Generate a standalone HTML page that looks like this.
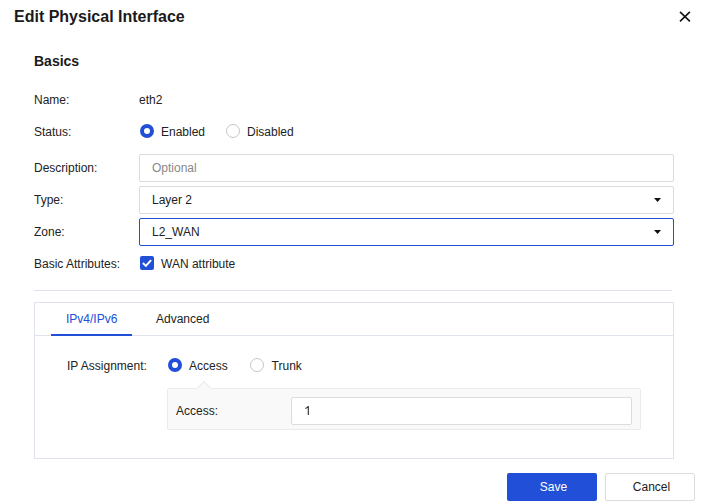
<!DOCTYPE html>
<html><head><meta charset="utf-8">
<style>
html,body{margin:0;padding:0;background:#fff;width:708px;height:504px;overflow:hidden;position:relative;}
body{font-family:"Liberation Sans",sans-serif;color:#222;}
.a{position:absolute;white-space:nowrap;}
.t{font-size:12px;line-height:14px;}
.title{font-size:16px;line-height:18px;font-weight:bold;color:#1a1a1a;}
.h{font-size:14px;line-height:16px;font-weight:bold;color:#1a1a1a;}
.inp{position:absolute;box-sizing:border-box;border:1px solid #dcdcdc;border-radius:2px;background:#fff;}
.radio{position:absolute;box-sizing:border-box;width:14px;height:14px;border-radius:50%;border:1px solid #c6c6c6;background:#fff;}
.radio.on{border:4px solid #214fd7;}
.caret{position:absolute;width:0;height:0;border-left:3.5px solid transparent;border-right:3.5px solid transparent;border-top:4px solid #111;}
</style></head>
<body>
<div class="a title" style="left:14px;top:8px;">Edit Physical Interface</div>
<svg class="a" style="left:679px;top:11px;" width="12" height="12" viewBox="0 0 12 12"><path d="M1 0.9L10.9 10.3M10.9 0.9L1 10.3" stroke="#111" stroke-width="1.6" fill="none"/></svg>

<div class="a h" style="left:34px;top:53px;">Basics</div>

<div class="a t" style="left:34px;top:93px;">Name:</div>
<div class="a t" style="left:139px;top:93px;">eth2</div>

<div class="a t" style="left:34px;top:125px;">Status:</div>
<div class="radio on" style="left:140px;top:124px;"></div>
<div class="a t" style="left:161px;top:125px;">Enabled</div>
<div class="radio" style="left:226px;top:124px;"></div>
<div class="a t" style="left:247px;top:125px;">Disabled</div>

<div class="a t" style="left:34px;top:161px;">Description:</div>
<div class="inp" style="left:139px;top:154px;width:535px;height:28px;"></div>
<div class="a t" style="left:152px;top:161px;color:#888;">Optional</div>

<div class="a t" style="left:34px;top:193px;">Type:</div>
<div class="inp" style="left:139px;top:186px;width:535px;height:28px;"></div>
<div class="a t" style="left:152px;top:193px;">Layer 2</div>
<svg class="a" style="left:653px;top:197px;" width="10" height="7"><polygon points="1,1 8,1 4.6,5" fill="#111"/></svg>

<div class="a t" style="left:34px;top:225px;">Zone:</div>
<div class="inp" style="left:139px;top:218px;width:535px;height:28px;border:1px solid #214fd7;"></div>
<div class="a t" style="left:152px;top:225px;">L2_WAN</div>
<svg class="a" style="left:653px;top:229px;" width="10" height="7"><polygon points="1,1 8,1 4.6,5" fill="#111"/></svg>

<div class="a t" style="left:34px;top:257px;">Basic Attributes:</div>
<div class="a" style="left:140px;top:256px;width:14px;height:14px;border-radius:2px;background:#214fd7;"></div>
<svg class="a" style="left:140px;top:256px;" width="14" height="14" viewBox="0 0 14 14"><path d="M2.9 7.1L5.9 9.9L11.1 4.1" stroke="#fff" stroke-width="2" fill="none"/></svg>
<div class="a t" style="left:161px;top:257px;">WAN attribute</div>

<div class="a" style="left:34px;top:290px;width:638px;height:1px;background:#dfe3ee;"></div>

<div class="a" style="left:34px;top:302px;width:638px;height:155px;border:1px solid #dfe3ee;"></div>
<div class="a" style="left:35px;top:335px;width:638px;height:1px;background:#dfe3ee;"></div>
<div class="a" style="left:51px;top:334px;width:81px;height:2px;background:#214fd7;"></div>
<div class="a t" style="left:66px;top:312px;color:#214fd7;">IPv4/IPv6</div>
<div class="a t" style="left:156px;top:312px;">Advanced</div>

<div class="a t" style="left:67px;top:359px;">IP Assignment:</div>
<div class="radio on" style="left:168px;top:358px;"></div>
<div class="a t" style="left:189px;top:359px;">Access</div>
<div class="radio" style="left:250px;top:358px;"></div>
<div class="a t" style="left:271.6px;top:359px;">Trunk</div>

<div class="a" style="left:167px;top:388px;width:472px;height:40px;border:1px solid #ebebeb;border-radius:2px;background:#f9f9f9;"></div>
<div class="a" style="left:199.4px;top:383px;width:9px;height:9px;transform:rotate(45deg);background:#f9f9f9;border-left:1px solid #ebebeb;border-top:1px solid #ebebeb;"></div>
<div class="a t" style="left:176px;top:404px;">Access:</div>
<div class="inp" style="left:291px;top:397px;width:341px;height:28px;"></div>
<svg class="a" style="left:304px;top:405px;" width="8" height="11"><path d="M4.3 1V10M4.3 1.3C3.6 2.6 2.6 3.2 1.4 3.6" stroke="#222" stroke-width="1.05" fill="none"/></svg>

<div class="a" style="left:507px;top:473px;width:90px;height:28px;border-radius:2px;background:#214fd7;color:#fff;font-size:12px;line-height:28px;text-align:center;box-sizing:border-box;padding-left:3px;">Save</div>
<div class="a" style="left:605px;top:473px;width:90px;height:28px;box-sizing:border-box;border:1px solid #dcdcdc;border-radius:2px;background:#fff;color:#222;font-size:12px;line-height:26px;text-align:center;padding-left:3px;">Cancel</div>
</body></html>
